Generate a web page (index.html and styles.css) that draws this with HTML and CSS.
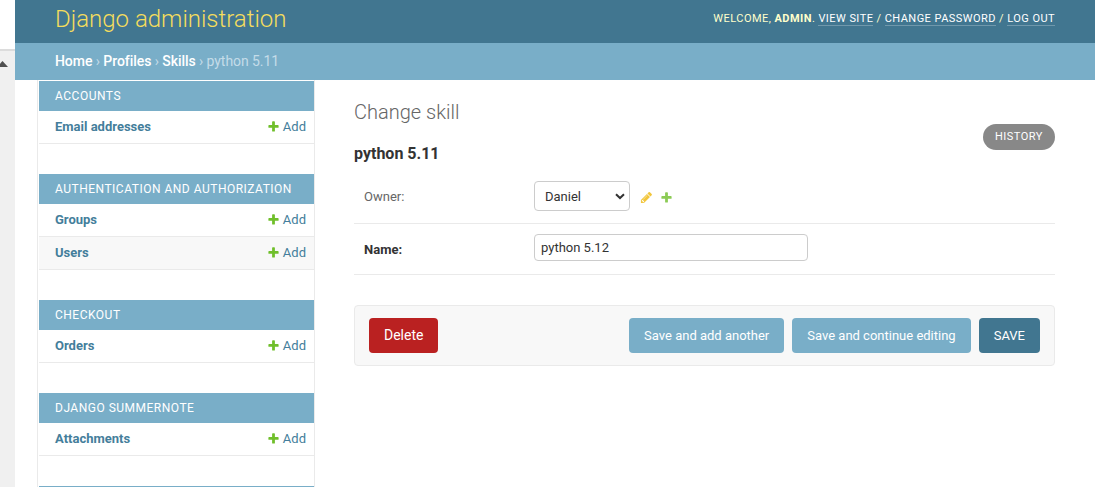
FILE: index.html
```html
<!DOCTYPE html>
<html lang="en">
<head>
<meta charset="utf-8">
<title>Change skill | Django administration</title>
<link rel="stylesheet" href="styles.css">
</head>
<body>
<svg class="defs" aria-hidden="true">
  <symbol id="plus" viewBox="0 0 1792 1792"><path d="M1600 796v192q0 40-28 68t-68 28h-416v416q0 40-28 68t-68 28h-192q-40 0-68-28t-28-68v-416h-416q-40 0-68-28t-28-68v-192q0-40 28-68t68-28h416v-416q0-40 28-68t68-28h192q40 0 68 28t28 68v416h416q40 0 68 28t28 68z"/></symbol>
  <symbol id="pencil" viewBox="0 0 1792 1792"><path d="M491 1536l91-91-235-235-91 91v107h128v128h107zm523-928q0-22-22-22-10 0-17 7l-542 542q-7 7-7 17 0 22 22 22 10 0 17-7l542-542q7-7 7-17zm-54-192l416 416-832 832h-416v-416zm683 96q0 53-37 90l-166 166-416-416 166-165q36-38 90-38 53 0 91 38l235 234q37 39 37 91z"/></symbol>
</svg>
<div class="window">
  <div class="gutter">
    <div class="gutter-top"></div>
    <svg class="gutter-arrow" width="8" height="6" viewBox="0 0 8 6"><path d="M-3 6L2.5 0L8 6z"/></svg>
  </div>
  <div class="page">
    <header class="header">
      <h1 class="branding">Django administration</h1>
      <div class="user-tools">Welcome, <strong>admin</strong>. <a>View site</a> / <a>Change password</a> / <a>Log out</a></div>
    </header>
    <nav class="breadcrumbs"><a>Home</a> › <a>Profiles</a> › <a>Skills</a> › python 5.11</nav>
    <div class="main">
      <aside class="sidebar">
        <section class="module">
          <h2 class="caption">Accounts</h2>
          <div class="row"><a class="model">Email addresses</a><a class="add"><svg class="icon"><use href="#plus"/></svg>Add</a></div>
        </section>
        <section class="module">
          <h2 class="caption">Authentication and Authorization</h2>
          <div class="row"><a class="model">Groups</a><a class="add"><svg class="icon"><use href="#plus"/></svg>Add</a></div>
          <div class="row row-alt"><a class="model">Users</a><a class="add"><svg class="icon"><use href="#plus"/></svg>Add</a></div>
        </section>
        <section class="module">
          <h2 class="caption">Checkout</h2>
          <div class="row"><a class="model">Orders</a><a class="add"><svg class="icon"><use href="#plus"/></svg>Add</a></div>
        </section>
        <section class="module">
          <h2 class="caption">Django Summernote</h2>
          <div class="row"><a class="model">Attachments</a><a class="add"><svg class="icon"><use href="#plus"/></svg>Add</a></div>
        </section>
        <section class="module"><div class="caption"></div></section>
      </aside>
      <main class="content">
        <div class="heading">
          <div>
            <h2 class="title">Change skill</h2>
            <h3 class="object">python 5.11</h3>
          </div>
          <a class="history">History</a>
        </div>
        <div class="form-row owner-row">
          <label class="label">Owner:</label>
          <div class="select"><span>Daniel</span><svg class="chevron" width="10" height="7" viewBox="0 0 10 7"><path d="M1 1.2L5 5L9 1.2"/></svg></div>
          <div class="related"><svg class="icon pencil"><use href="#pencil"/></svg><svg class="icon"><use href="#plus"/></svg></div>
        </div>
        <div class="form-row name-row">
          <label class="label required">Name:</label>
          <input class="input" type="text" value="python 5.12">
        </div>
        <div class="submit-row">
          <a class="button delete">Delete</a>
          <a class="button">Save and add another</a>
          <a class="button">Save and continue editing</a>
          <a class="button default">SAVE</a>
        </div>
      </main>
    </div>
  </div>
</div>
</body>
</html>
```

FILE: styles.css
```css
* { box-sizing: border-box; }
body {
  margin: 0;
  background: #fff;
  color: #333;
  font: 13px/16px Roboto, "Liberation Sans", sans-serif;
}
h1, h2, h3 { margin: 0; }
.defs { display: none; }
.window { display: flex; height: 487px; overflow: hidden; }

.gutter { width: 15px; flex: none; background: #f0f0f0; }
.gutter-top { height: 51px; background: #fff; border-bottom: 2px solid #dcdcdc; }
.gutter-arrow { display: block; margin-top: 10px; fill: #505050; }

.page { flex: 1; min-width: 0; }
.header {
  display: flex;
  justify-content: space-between;
  height: 43px;
  padding: 0 40px;
  background: #417690;
  color: #ffc;
}
.branding { margin-top: 5px; font-size: 24px; line-height: 29px; font-weight: 300; color: #f5dd5d; }
.user-tools {
  margin-top: 11px;
  font-size: 11px;
  font-weight: 400;
  letter-spacing: .45px;
  text-transform: uppercase;
}
.user-tools strong { font-weight: 700; }
.user-tools a { color: #fff; border-bottom: 1px solid rgba(255, 255, 255, .25); }
.breadcrumbs {
  height: 37px;
  padding: 10px 40px;
  background: #79aec8;
  color: #c4dce8;
  font-size: 14px;
  letter-spacing: -.06px;
}
.breadcrumbs a { color: #fff; font-weight: 500; }

.main { display: flex; height: 407px; }
.sidebar {
  width: 278px;
  flex: none;
  margin-left: 22px;
  padding: 1px 0 0 1px;
  border: solid #eaeaea;
  border-width: 0 1px;
}
.module { margin-bottom: 30px; }
.caption {
  height: 30px;
  padding: 7px 16px;
  background: #79aec8;
  color: #fff;
  font-size: 12px;
  font-weight: 400;
  line-height: 16px;
  letter-spacing: .5px;
  text-transform: uppercase;
  white-space: nowrap;
}
.row {
  display: flex;
  justify-content: space-between;
  height: 33px;
  padding: 8px 8px 0 16px;
  border-bottom: 1px solid #eaeaea;
  color: #447e9b;
}
.row-alt { background: #f8f8f8; }
.model { font-weight: 700; }
.add { display: flex; }
.icon { width: 13px; height: 13px; fill: #70bf2b; }
.add .icon { margin: 1px 3px 0 0; }

.content { flex: 1; margin-left: 39px; padding: 20px 40px 0 0; }
.heading { display: flex; justify-content: space-between; height: 90px; }
.title { font-size: 20px; line-height: 24px; font-weight: 300; color: #666; }
.object { margin-top: 20px; font-size: 16px; line-height: 19px; font-weight: 700; }
.history {
  width: 72px;
  height: 26px;
  margin-top: 24px;
  border-radius: 15px;
  background: #888;
  color: #fff;
  font-size: 11px;
  font-weight: 400;
  line-height: 25px;
  letter-spacing: .5px;
  text-align: center;
  text-transform: uppercase;
}
.form-row { display: flex; padding: 10px 0 0 10px; border-bottom: 1px solid #eaeaea; }
.owner-row { height: 44px; padding-top: 1px; margin-top: -10px; }
.name-row { height: 51px; }
.label { width: 170px; padding-top: 8px; color: #666; }
.required { padding-top: 8px; color: #333; font-weight: 700; }
.select {
  display: flex;
  justify-content: space-between;
  align-items: center;
  width: 96px;
  height: 30px;
  padding: 1px 4px 0 10px;
  border: 1px solid #ccc;
  border-radius: 4px;
}
.chevron { fill: none; stroke: #333; stroke-width: 2; }
.related { display: flex; gap: 7px; margin: 10px 0 0 10px; opacity: .8; }
.pencil { fill: #efb80b; }
.input {
  width: 274px;
  height: 27px;
  padding: 5px 6px;
  border: 1px solid #ccc;
  border-radius: 4px;
  color: #333;
  font: inherit;
}
.submit-row {
  display: flex;
  gap: 8px;
  height: 61px;
  margin-top: 30px;
  padding: 12px 14px;
  border: 1px solid #eaeaea;
  border-radius: 4px;
  background: #f8f8f8;
}
.button {
  height: 35px;
  padding: 0 15px;
  border-radius: 4px;
  background: #79aec8;
  color: #fff;
  font-weight: 400;
  line-height: 35px;
  white-space: nowrap;
}
.delete { margin-right: auto; background: #ba2121; font-size: 14px; }
.default { background: #417690; }
```
